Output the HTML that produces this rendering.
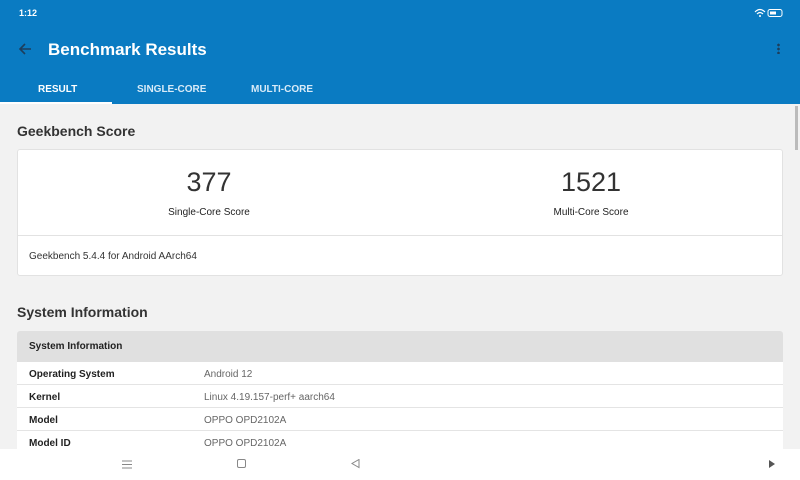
<!DOCTYPE html>
<html><head><style>
*{margin:0;padding:0;box-sizing:border-box}
body{width:800px;height:480px;overflow:hidden;background:#f2f2f2;font-family:"Liberation Sans",sans-serif;position:relative}
.abs{position:absolute}
.hdr{left:0;top:0;width:800px;height:104px;background:#0a7bc2}
.tab{top:84px;font-size:10px;color:#d8ebf8;font-weight:bold}
.card{left:17px;top:149px;width:766px;height:127px;background:#fff;border:1px solid #e2e2e2;border-radius:3px}
.row{left:17px;width:766px;height:23px;background:#fff;border-bottom:1px solid #e4e4e4;font-size:10px}
.row .k{position:absolute;left:12px;top:7px;color:#222;font-weight:bold}
.row .v{position:absolute;left:187px;top:7px;color:#666}
</style></head><body>
<div class="abs hdr"></div>
<div class="abs" style="left:19px;top:8px;color:#fff;font-size:9px;font-weight:bold">1:12</div>
<svg class="abs" style="left:754px;top:8px" width="34" height="10"><path d="M1 4 Q6 -1 11 4 M3 6 Q6 3 9 6" stroke="#fff" fill="none" stroke-width="1.2"/><circle cx="6" cy="8" r="1" fill="#fff"/><rect x="14" y="1.5" width="14" height="7" rx="2" fill="none" stroke="#fff"/><rect x="16" y="3.5" width="6" height="3" fill="#fff"/></svg>
<svg class="abs" style="left:18px;top:42px" width="14" height="14"><path d="M13 7H2M7 2L2 7L7 12" stroke="#1d3e5c" stroke-width="1.6" fill="none"/></svg>
<div class="abs" style="left:48px;top:40px;color:#fff;font-size:17px;font-weight:bold">Benchmark Results</div>
<div class="abs" style="left:777px;top:43px;width:3px;height:11px;background:radial-gradient(circle,#1d3e5c 1.2px,transparent 1.5px) 0 0/3px 4px repeat-y"></div>
<div class="abs tab" style="left:38px;color:#fff">RESULT</div>
<div class="abs tab" style="left:137px">SINGLE-CORE</div>
<div class="abs tab" style="left:251px">MULTI-CORE</div>
<div class="abs" style="left:0;top:102px;width:112px;height:2px;background:#fff"></div>
<div class="abs" style="left:795px;top:106px;width:3px;height:44px;background:#bbb"></div>
<div class="abs" style="left:17px;top:123px;font-size:14px;font-weight:bold;color:#333">Geekbench Score</div>
<div class="abs card"></div>
<div class="abs" style="left:17px;top:235px;width:766px;height:1px;background:#e2e2e2"></div>
<div class="abs" style="left:109px;width:200px;top:167px;text-align:center;font-size:27px;color:#333">377</div>
<div class="abs" style="left:109px;width:200px;top:207px;text-align:center;font-size:10px;color:#222">Single-Core Score</div>
<div class="abs" style="left:491px;width:200px;top:167px;text-align:center;font-size:27px;color:#333">1521</div>
<div class="abs" style="left:491px;width:200px;top:207px;text-align:center;font-size:10px;color:#222">Multi-Core Score</div>
<div class="abs" style="left:29px;top:251px;font-size:10px;color:#333">Geekbench 5.4.4 for Android AArch64</div>
<div class="abs" style="left:17px;top:304px;font-size:14px;font-weight:bold;color:#333">System Information</div>
<div class="abs" style="left:17px;top:331px;width:766px;height:31px;background:#e0e0e0;border-radius:3px 3px 0 0"><div style="position:absolute;left:12px;top:10px;font-size:10px;font-weight:bold;color:#222">System Information</div></div>
<div class="abs row" style="top:362px"><span class="k">Operating System</span><span class="v">Android 12</span></div>
<div class="abs row" style="top:385px"><span class="k">Kernel</span><span class="v">Linux 4.19.157-perf+ aarch64</span></div>
<div class="abs row" style="top:408px"><span class="k">Model</span><span class="v">OPPO OPD2102A</span></div>
<div class="abs row" style="top:431px"><span class="k">Model ID</span><span class="v">OPPO OPD2102A</span></div>
<div class="abs" style="left:0;top:449px;width:800px;height:31px;background:#fff"></div>
<svg class="abs" style="left:122px;top:460px" width="10" height="9"><path d="M0 1H10M0 4.5H10M0 8H10" stroke="#888" stroke-width="1"/></svg>
<svg class="abs" style="left:237px;top:459px" width="10" height="10"><rect x="0.5" y="0.5" width="8" height="8" rx="1.5" fill="none" stroke="#888"/></svg>
<svg class="abs" style="left:351px;top:459px" width="10" height="10"><path d="M8 0.5V8.5L1 4.5Z" fill="none" stroke="#888"/></svg>
<svg class="abs" style="left:768px;top:460px" width="8" height="9"><path d="M1 0V8L7 4Z" fill="#555"/></svg>
</body></html>
